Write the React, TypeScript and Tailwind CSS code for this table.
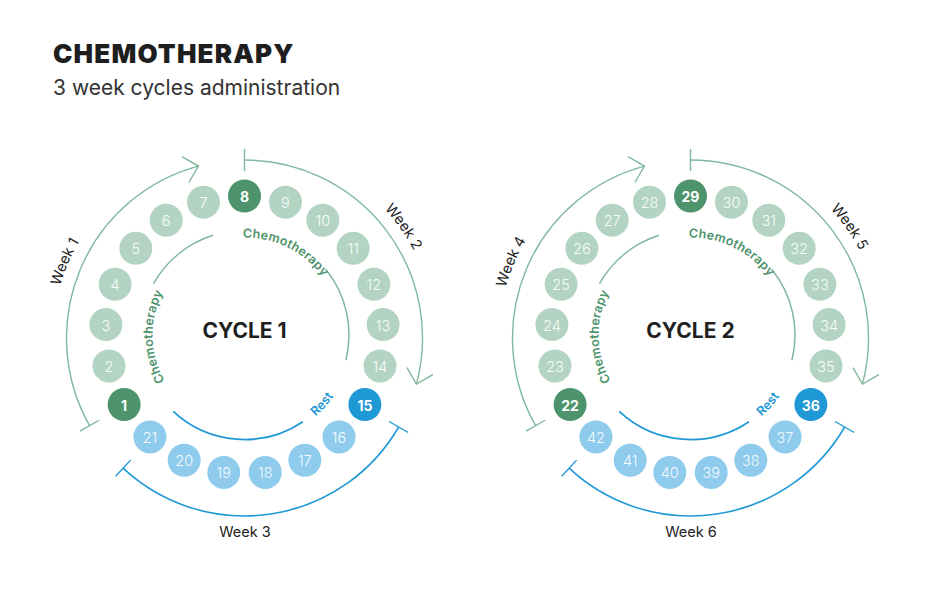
const GREEN_DARK = '#4d936b'
const GREEN_LIGHT = '#b3d4c2'
const BLUE_DARK = '#1f98d6'
const BLUE_LIGHT = '#8ecbec'
const GREEN_LINE = '#7fb99b'
const BLUE_LINE = '#1f98d6'

// ring centre inside each svg
const CX = 222.5
const CY = 211
const OY = 214 // outer week arcs sit a little lower
const RING = 139
const INNER = 104.5
const OUTER = 178

const rad = (d: number) => (d * Math.PI) / 180
const pt = (cx: number, cy: number, r: number, d: number) => [cx + r * Math.cos(rad(d)), cy + r * Math.sin(rad(d))]

function arc(cx: number, cy: number, r: number, a1: number, a2: number, cw = true) {
  const span = cw ? (((a2 - a1) % 360) + 360) % 360 : (((a1 - a2) % 360) + 360) % 360
  const [x1, y1] = pt(cx, cy, r, a1)
  const [x2, y2] = pt(cx, cy, r, a2)
  return `M${x1} ${y1} A${r} ${r} 0 ${span > 180 ? 1 : 0} ${cw ? 1 : 0} ${x2} ${y2}`
}

function Tick({ a, color }: { a: number; color: string }) {
  const [x1, y1] = pt(CX, OY, OUTER - 11, a)
  const [x2, y2] = pt(CX, OY, OUTER + 11, a)
  return <line x1={x1} y1={y1} x2={x2} y2={y2} stroke={color} strokeWidth={1.4} />
}

function Arrow({ a, color }: { a: number; color: string }) {
  const [tx, ty] = pt(CX, OY, OUTER, a)
  const [ax, ay] = pt(tx, ty, 19, a - 90 - 45)
  const [bx, by] = pt(tx, ty, 19, a - 90 + 45)
  return <polyline points={`${ax},${ay} ${tx},${ty} ${bx},${by}`} fill="none" stroke={color} strokeWidth={1.4} />
}

const labelGreen = "font-['Inter'] text-[12.5px] font-semibold tracking-[0.02em] fill-[#4d936b]"
const labelBlue = "font-['Inter'] text-[12.5px] font-semibold tracking-[0.02em] fill-[#1f98d6]"
const weekText = "font-['Inter'] text-[14.5px] fill-[#222]"

function Cycle({ id, n, start, weeks }: { id: string; n: number; start: number; weeks: string[] }) {
  const days = Array.from({ length: 21 }, (_, i) => i)

  return (
    <svg width={446} height={440} viewBox="0 0 446 440" className="block shrink-0">
      <defs>
        <path id={`${id}-chemoL`} d={arc(CX, CY, 92, 150, 215)} />
        <path id={`${id}-chemoT`} d={arc(CX, CY, 97.5, 269, 330)} />
        <path id={`${id}-rest`} d={arc(CX, CY, 108, 49, 20, false)} />
        <path id={`${id}-w1`} d={arc(CX, OY, 191.5, 173, 233)} />
        <path id={`${id}-w2`} d={arc(CX, OY, 190.5, 295, 355)} />
      </defs>

      {/* week arcs */}
      <path d={arc(CX, OY, OUTER, 150.5, 255)} fill="none" stroke={GREEN_LINE} strokeWidth={1.4} />
      <Tick a={150.5} color={GREEN_LINE} />
      <Arrow a={255} color={GREEN_LINE} />

      <path d={arc(CX, OY, OUTER, 270, 15)} fill="none" stroke={GREEN_LINE} strokeWidth={1.4} />
      <Tick a={270} color={GREEN_LINE} />
      <Arrow a={15} color={GREEN_LINE} />

      <path d={arc(CX, OY, OUTER, 30, 133)} fill="none" stroke={BLUE_LINE} strokeWidth={1.6} />
      <Tick a={30} color={BLUE_LINE} />
      <Tick a={133} color={BLUE_LINE} />

      <text className={weekText}>
        <textPath href={`#${id}-w1`} startOffset="50%" textAnchor="middle">
          {weeks[0]}
        </textPath>
      </text>
      <text className={weekText}>
        <textPath href={`#${id}-w2`} startOffset="50%" textAnchor="middle">
          {weeks[1]}
        </textPath>
      </text>
      <text x={CX + 0.5} y={413} textAnchor="middle" className={weekText}>
        {weeks[2]}
      </text>

      {/* inner phase arcs */}
      <path d={arc(CX, CY, INNER, 209.5, 252.5)} fill="none" stroke={GREEN_LINE} strokeWidth={1.5} />
      <path d={arc(CX, CY, INNER, 321, 14)} fill="none" stroke={GREEN_LINE} strokeWidth={1.5} />
      <path d={arc(CX, CY, INNER, 56, 133)} fill="none" stroke={BLUE_LINE} strokeWidth={1.8} />

      <text className={labelGreen}>
        <textPath href={`#${id}-chemoL`}>Chemotherapy</textPath>
      </text>
      <text className={labelGreen}>
        <textPath href={`#${id}-chemoT`}>Chemotherapy</textPath>
      </text>
      <text className={labelBlue}>
        <textPath href={`#${id}-rest`}>Rest</textPath>
      </text>

      <text
        x={CX}
        y={CY - 5}
        textAnchor="middle"
        dominantBaseline="central"
        className="font-['Inter'] text-[21px] font-bold fill-[#1f1f1f]"
      >
        CYCLE {n}
      </text>

      {/* day dots */}
      {days.map((i) => {
        const [x, y] = pt(CX, CY, RING, 270 + ((i - 7) * 360) / 21)
        const rest = i >= 14
        const strong = i === 0 || i === 7 || i === 14
        const fill = rest ? (strong ? BLUE_DARK : BLUE_LIGHT) : strong ? GREEN_DARK : GREEN_LIGHT
        return (
          <g key={i}>
            <circle cx={x} cy={y} r={16.5} fill={fill} />
            <text
              x={x}
              y={y + 0.5}
              textAnchor="middle"
              dominantBaseline="central"
              className={
                strong
                  ? "font-['Inter'] text-[14px] font-bold fill-white"
                  : "font-['Inter'] text-[14.5px] font-light fill-white/90"
              }
            >
              {start + i}
            </text>
          </g>
        )
      })}
    </svg>
  )
}

export default function App() {
  return (
    <div className="w-[940px] h-[606px] bg-white overflow-hidden font-['Inter','Liberation_Sans',sans-serif]">
      <div className="h-[124px] pl-[53px] pt-[41px]">
        <h1 className="text-[26px] leading-none font-black tracking-[0.045em] text-[#1e1e1e]">CHEMOTHERAPY</h1>
        <p className="mt-[10px] text-[21px] leading-none text-[#333]">3 week cycles administration</p>
      </div>
      <div className="flex pl-[22px]">
        <Cycle id="c1" n={1} start={1} weeks={['Week 1', 'Week 2', 'Week 3']} />
        <Cycle id="c2" n={2} start={22} weeks={['Week 4', 'Week 5', 'Week 6']} />
      </div>
    </div>
  )
}
